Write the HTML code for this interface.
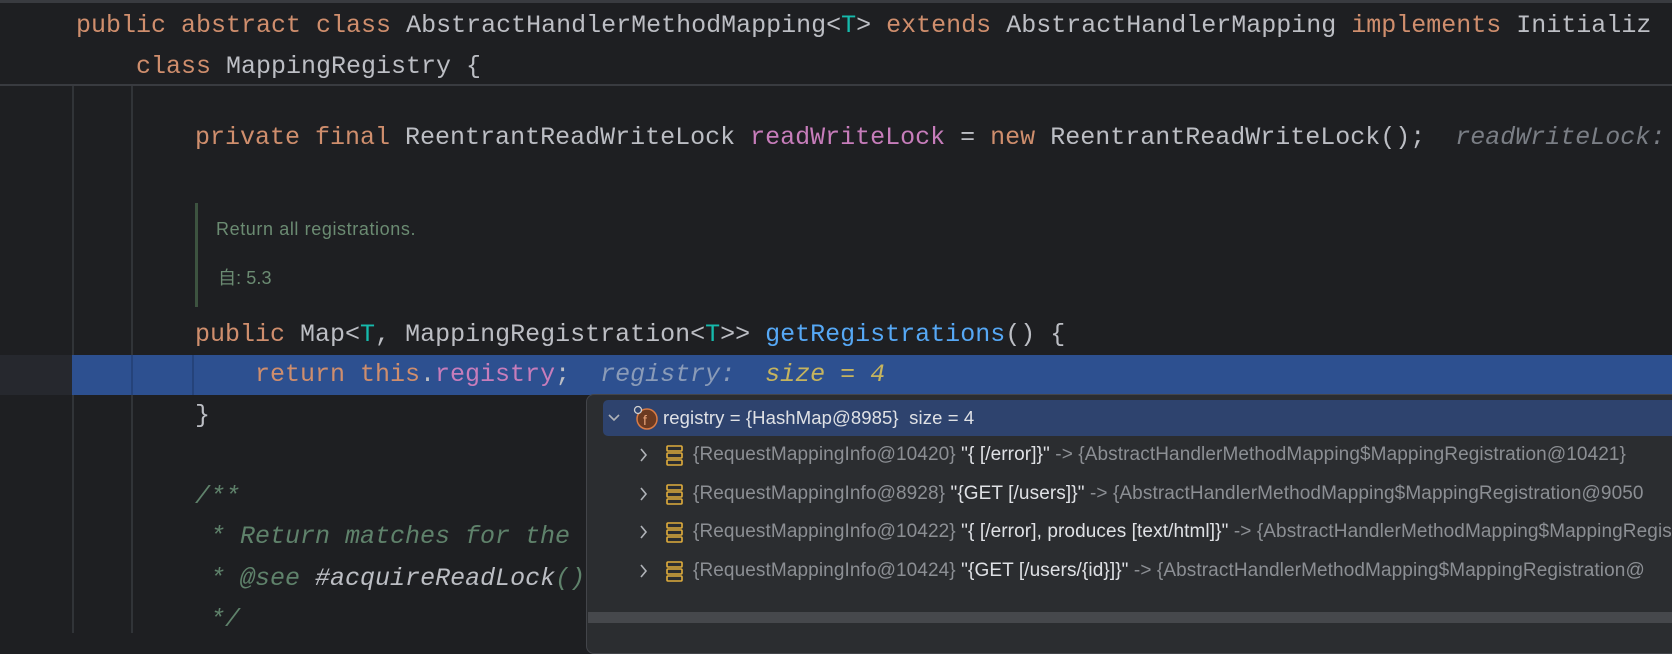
<!DOCTYPE html>
<html><head><meta charset="utf-8"><style>
*{margin:0;padding:0;box-sizing:border-box}
body{width:1672px;height:633px;background:#1e1f22;overflow:hidden;position:relative;font-family:"Liberation Mono",monospace;font-size:25px;color:#bcbec4}
.l{position:absolute;height:40px;line-height:40px;white-space:pre}
.k{color:#cf8e6d}.t{color:#16baac}.f{color:#c77dbb}.m{color:#56a8f5}
.h{color:#7a7e85;font-style:italic}.c{color:#5f826b;font-style:italic}
.g{position:absolute;width:2px;background:#313438}
.p{position:absolute;font-family:"Liberation Sans",sans-serif;font-size:19px;white-space:pre;line-height:36px;letter-spacing:0.1px}
.gr{color:#8c8f94}.w{color:#dfe1e5}
</style></head><body>
<div style="position:absolute;left:0;top:0;width:1672px;height:3px;background:#393b40"></div>
<div style="position:absolute;left:0;top:84px;width:1672px;height:2px;background:#393b40"></div>
<div class="g" style="left:72px;top:86px;height:547px"></div>
<div class="g" style="left:131px;top:86px;height:547px"></div>
<div style="position:absolute;left:0;top:355px;width:72px;height:40px;background:#26282e"></div>
<div style="position:absolute;left:72px;top:355px;width:1600px;height:40px;background:#2d5090"></div>
<div class="g" style="left:131px;top:355px;height:40px;background:#25437a"></div>
<div class="g" style="left:192px;top:355px;height:40px;background:#25437a"></div>

<div class="l" style="left:76px;top:6px"><span class="k">public abstract class </span>AbstractHandlerMethodMapping&lt;<span class="t">T</span>&gt; <span class="k">extends </span>AbstractHandlerMapping <span class="k">implements </span>Initializ</div>
<div class="l" style="left:136px;top:47px"><span class="k">class </span>MappingRegistry {</div>
<div class="l" style="left:195px;top:118px"><span class="k">private final </span>ReentrantReadWriteLock <span class="f">readWriteLock</span> = <span class="k">new </span>ReentrantReadWriteLock();  <span class="h">readWriteLock: </span></div>

<div style="position:absolute;left:195px;top:203px;width:3px;height:104px;background:#3d5340"></div>
<div class="p" style="left:216px;top:211px;color:#6b8b72;font-size:18px;letter-spacing:0.6px">Return all registrations.</div>
<div class="p" style="left:218px;top:260px;color:#6b8b72;font-size:18px;font-family:'Liberation Sans','Noto Sans CJK SC',sans-serif">自: 5.3</div>

<div class="l" style="left:195px;top:315px"><span class="k">public </span>Map&lt;<span class="t">T</span>, MappingRegistration&lt;<span class="t">T</span>&gt;&gt; <span class="m">getRegistrations</span>() {</div>
<div class="l" style="left:255px;top:355px"><span class="k">return this</span>.<span class="f">registry</span>;  <span class="h" style="color:#8a9bb8">registry:  </span><span style="color:#c6b45e;font-style:italic">size = 4</span></div>
<div class="l" style="left:195px;top:396px">}</div>
<div class="l c" style="left:195px;top:477px">/**</div>
<div class="l c" style="left:195px;top:517px"> * Return matches for the</div>
<div class="l c" style="left:195px;top:559px"> * <span style="font-style:italic">@see</span> <span style="color:#bcbec4">#acquireReadLock</span>()</div>
<div class="l c" style="left:195px;top:600px"> */</div>

<div style="position:absolute;left:586px;top:394px;width:1100px;height:260px;background:#2b2d30;border:1px solid #43454a;border-radius:8px"></div>
<div style="position:absolute;left:603px;top:400px;width:1080px;height:36px;background:#2e436e;border-radius:5px"></div>
<svg style="position:absolute;left:606px;top:410px" width="16" height="16"><path d="M3 5 L8 10 L13 5" fill="none" stroke="#b0b3b8" stroke-width="1.6"/></svg>
<svg style="position:absolute;left:632px;top:404px" width="30" height="30"><circle cx="15" cy="15" r="10" fill="#6b3a21" stroke="#d97b45" stroke-width="1.5"/><text x="11" y="21" font-family="Liberation Sans" font-size="14" fill="#e8a37a">f</text><circle cx="6" cy="6" r="3.5" fill="#2e436e" stroke="#d0d0d0" stroke-width="1.3"/></svg>
<div class="p w" style="left:663px;top:400px;font-size:18.5px">registry = {HashMap@8985}  size = 4</div>

<div style="position:absolute;left:588px;top:612px;width:1090px;height:11px;background:#46484c"></div>

<div class="p" style="left:693px;top:437px"><span class="gr">{RequestMappingInfo@10420}</span> <span class="w">"{ [/error]}"</span> <span class="gr">-&gt; {AbstractHandlerMethodMapping$MappingRegistration@10421}</span></div>
<div class="p" style="left:693px;top:476px"><span class="gr">{RequestMappingInfo@8928}</span> <span class="w">"{GET [/users]}"</span> <span class="gr">-&gt; {AbstractHandlerMethodMapping$MappingRegistration@9050</span></div>
<div class="p" style="left:693px;top:514px"><span class="gr">{RequestMappingInfo@10422}</span> <span class="w">"{ [/error], produces [text/html]}"</span> <span class="gr">-&gt; {AbstractHandlerMethodMapping$MappingRegistration</span></div>
<div class="p" style="left:693px;top:553px"><span class="gr">{RequestMappingInfo@10424}</span> <span class="w">"{GET [/users/{id}]}"</span> <span class="gr">-&gt; {AbstractHandlerMethodMapping$MappingRegistration@</span></div>

<svg style="position:absolute;left:636px;top:437px" width="60" height="160">
<g fill="none" stroke="#b0b3b8" stroke-width="1.6"><path d="M5 12 L10 18 L5 24"/><path d="M5 51 L10 57 L5 63"/><path d="M5 89 L10 95 L5 101"/><path d="M5 128 L10 134 L5 140"/></g>
<g fill="none" stroke="#e0ad3c" stroke-width="1.6">
<rect x="31" y="9" width="15" height="5" rx="1"/><rect x="31" y="16" width="15" height="5" rx="1"/><rect x="31" y="23" width="15" height="5" rx="1"/>
<rect x="31" y="48" width="15" height="5" rx="1"/><rect x="31" y="55" width="15" height="5" rx="1"/><rect x="31" y="62" width="15" height="5" rx="1"/>
<rect x="31" y="86" width="15" height="5" rx="1"/><rect x="31" y="93" width="15" height="5" rx="1"/><rect x="31" y="100" width="15" height="5" rx="1"/>
<rect x="31" y="125" width="15" height="5" rx="1"/><rect x="31" y="132" width="15" height="5" rx="1"/><rect x="31" y="139" width="15" height="5" rx="1"/>
</g></svg>
</body></html>
